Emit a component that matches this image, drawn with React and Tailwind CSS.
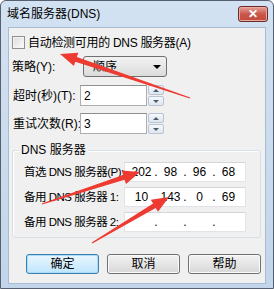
import React from 'react';

const FONT = { fontFamily: '"Liberation Sans", "Noto Sans CJK SC", sans-serif' };

// tapered arrow polygon, like a screenshot annotation tool
const arrowPoints = (tx, ty, hx, hy) => {
  const dx = hx - tx;
  const dy = hy - ty;
  const len = Math.hypot(dx, dy);
  const ux = dx / len;
  const uy = dy / len;
  const nx = -uy;
  const ny = ux;
  const headLen = 17;
  const bx = hx - ux * headLen;
  const by = hy - uy * headLen;
  const p = (x, y) => `${x.toFixed(1)},${y.toFixed(1)}`;
  return [
    p(tx + nx * 0.5, ty + ny * 0.5),
    p(bx + nx * 2.5, by + ny * 2.5),
    p(bx + nx * 7, by + ny * 7),
    p(hx, hy),
    p(bx - nx * 7, by - ny * 7),
    p(bx - nx * 2.5, by - ny * 2.5),
    p(tx - nx * 0.5, ty - ny * 0.5),
  ].join(' ');
};

const Spinner = () => (
  <div className="flex flex-col w-[16px] h-[21px] ml-[1px] gap-[1px]">
    <div className="flex-1 flex items-center justify-center border border-[#b8c4d4] rounded-[2px] bg-gradient-to-b from-[#f6f8fb] to-[#dfe6ee]">
      <div className="w-0 h-0 border-l-[3px] border-r-[3px] border-b-[3px] border-l-transparent border-r-transparent border-b-[#4a5a70]" />
    </div>
    <div className="flex-1 flex items-center justify-center border border-[#b8c4d4] rounded-[2px] bg-gradient-to-b from-[#f6f8fb] to-[#dfe6ee]">
      <div className="w-0 h-0 border-l-[3px] border-r-[3px] border-t-[3px] border-l-transparent border-r-transparent border-t-[#4a5a70]" />
    </div>
  </div>
);

const NumberRow = ({ label, value, className }) => (
  <div className={`flex items-center h-[21px] ${className}`}>
    <span className="w-[71px] pl-[4px] whitespace-nowrap">{label}</span>
    <div className="w-[67px] h-[21px] bg-white border border-[#abadb3] border-t-[#8e8f8f] flex items-center pl-[3px]">
      {value}
    </div>
    <Spinner />
  </div>
);

const IpBox = ({ label, parts, className }) => (
  <div className={`flex items-center h-[20px] ${className}`}>
    <span className="w-[111px] pl-[11px] whitespace-nowrap text-[11.5px] tracking-[-0.5px]">{label}</span>
    <div className="w-[122px] h-[20px] bg-white border border-[#e2e3e4] border-t-[#d5d6d8] flex items-center pl-[4px]">
      {parts.map((part, i) => (
        <React.Fragment key={i}>
          <span className="w-[25px] text-center">{part}</span>
          {i < 3 && <span className="w-[4px] text-center">.</span>}
        </React.Fragment>
      ))}
    </div>
  </div>
);

const Button = ({ children, primary }) => (
  <div
    className={`w-[73px] h-[20px] flex items-center justify-center rounded-[3px] border ${
      primary
        ? 'border-[#3c7fb1] bg-gradient-to-b from-[#eaf6fd] to-[#bee6fd] shadow-[inset_0_0_0_1px_#a8dcf8]'
        : 'border-[#707070] bg-gradient-to-b from-[#f2f2f2] to-[#d8d8d8] shadow-[inset_0_0_0_1px_#fbfbfb]'
    }`}
  >
    {children}
  </div>
);

export default function App() {
  return (
    <div
      className="relative w-[274px] h-[289px] flex flex-col bg-gradient-to-b from-[#d3e2f2] to-[#c2d5ea] border border-[#566070] rounded-t-[6px] overflow-hidden text-[12px] leading-[14px] text-black"
      style={FONT}
    >
      {/* title bar */}
      <div className="h-[26px] flex items-start justify-between pl-[6px] pr-[5px]">
        <span className="mt-[6px]">域名服务器(DNS)</span>
        <div className="mt-[5px] w-[30px] h-[16px] flex items-center justify-center rounded-[3px] border border-[#6d2b27] bg-gradient-to-b from-[#e4a39a] via-[#c9574a] to-[#c54a3b] shadow-[inset_0_0_0_1px_#e8aca4]">
          <span className="text-white font-bold text-[12px] leading-none">✕</span>
        </div>
      </div>

      {/* client area */}
      <div className="flex-1 mx-[7px] mb-[4px] bg-[#f0f0f0] border border-[#a9bbd0] flex flex-col">
        <label className="flex items-center mt-[8px] ml-[3px] h-[13px]">
          <span className="w-[13px] h-[13px] border border-[#8f8f8f] bg-gradient-to-br from-[#dcdcdc] to-[#fbfbfb] shadow-[inset_0_0_0_1px_#f4f4f4]" />
          <span className="ml-[3px] whitespace-nowrap tracking-[-0.3px]">自动检测可用的 DNS 服务器(A)</span>
        </label>

        <div className="flex items-center h-[21px] mt-[7px]">
          <span className="w-[74px] pl-[3px]">策略(Y):</span>
          <div className="w-[84px] h-[21px] rounded-[3px] border border-[#707070] bg-gradient-to-b from-[#f2f2f2] to-[#dbdbdb] flex items-center justify-between pl-[9px] pr-[5px]">
            <span>顺序</span>
            <div className="w-0 h-0 border-l-[4px] border-r-[4px] border-t-[4px] border-l-transparent border-r-transparent border-t-black" />
          </div>
        </div>

        <NumberRow label="超时(秒)(T):" value="2" className="mt-[8px]" />
        <NumberRow label="重试次数(R):" value="3" className="mt-[7px]" />

        {/* DNS group */}
        <div className="relative mt-[16px] ml-[3px] mr-[4px] h-[88px] border border-[#d5dfe5] rounded-[3px] shadow-[inset_1px_1px_0_#ffffff]">
          <span className="absolute -top-[8px] left-[6px] px-[2px] bg-[#f0f0f0]">DNS 服务器</span>
          <IpBox label="首选 DNS 服务器(P):" parts={['202', '98', '96', '68']} className="mt-[11px]" />
          <IpBox label="备用 DNS 服务器 1:" parts={['10', '143', '0', '69']} className="mt-[5px]" />
          <IpBox label="备用 DNS 服务器 2:" parts={['', '', '', '']} className="mt-[5px]" />
        </div>

        <div className="flex mt-[16px] ml-[17px] gap-[8px]">
          <Button primary>确定</Button>
          <Button>取消</Button>
          <Button>帮助</Button>
        </div>
      </div>

      {/* annotation arrows */}
      <svg className="absolute left-[-1px] top-[-1px] pointer-events-none" width="274" height="289">
        <polygon points={arrowPoints(190, 98, 60, 54)} fill="#ee3b32" />
        <polygon points={arrowPoints(42, 204, 140, 172)} fill="#ee3b32" />
        <polygon points={arrowPoints(92, 243, 169, 197)} fill="#ee3b32" />
      </svg>
    </div>
  );
}
